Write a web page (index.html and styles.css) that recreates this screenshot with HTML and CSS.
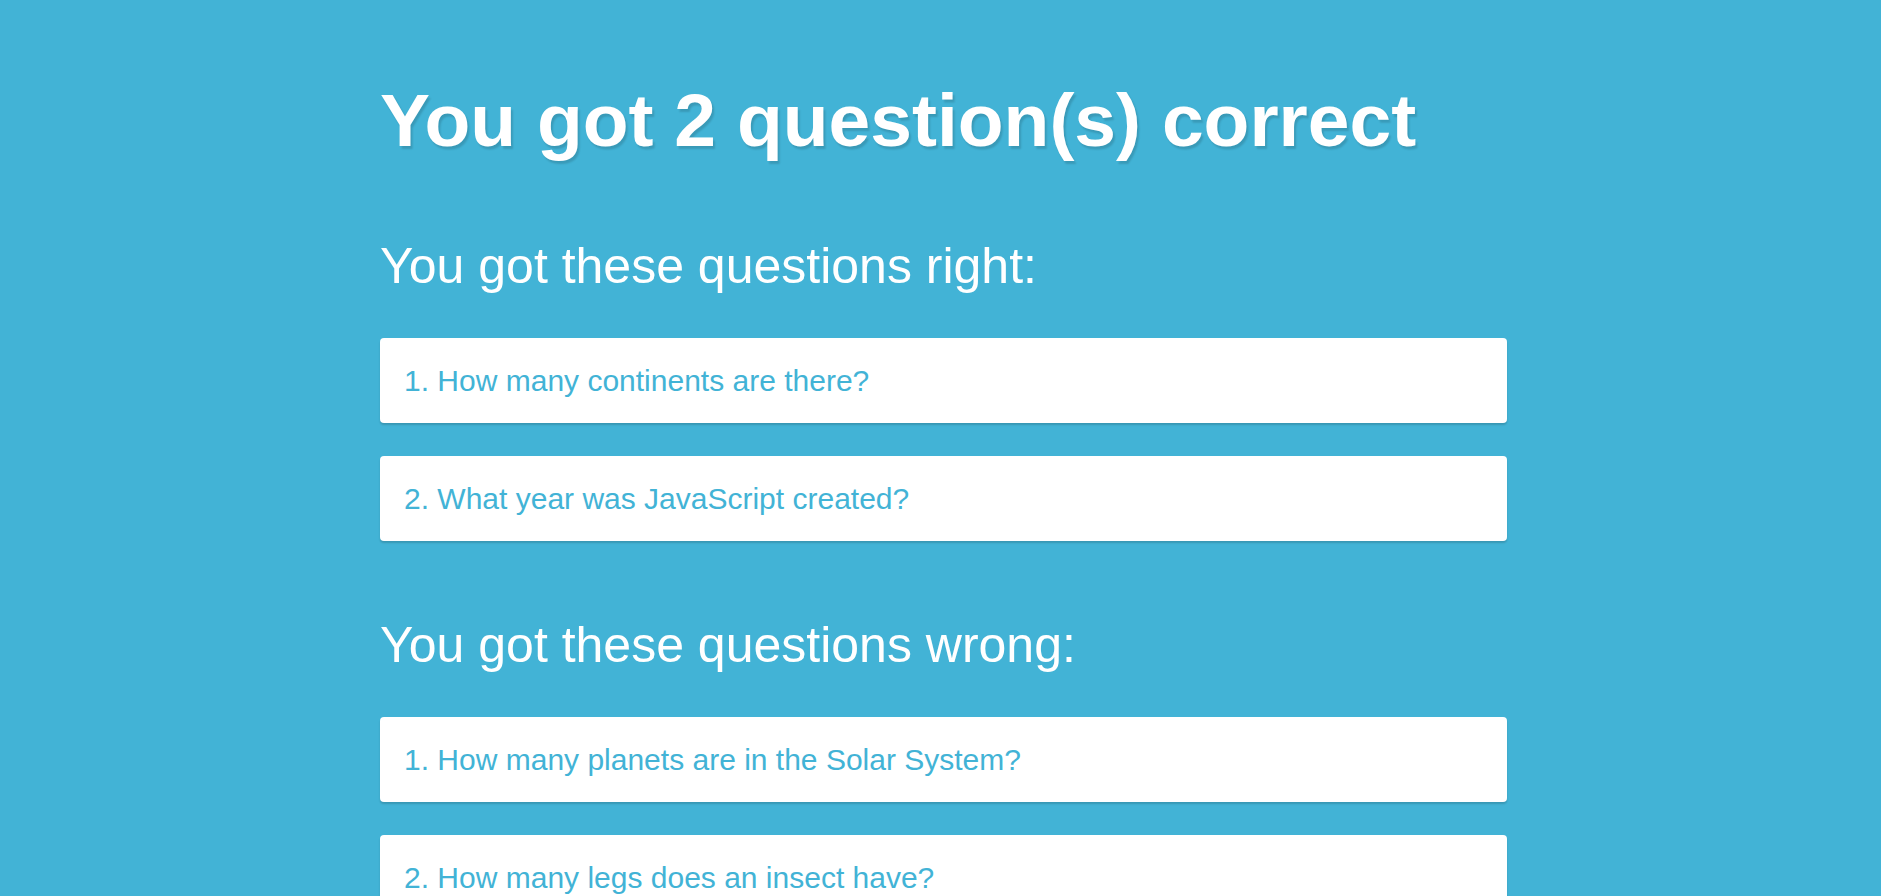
FILE: index.html
```html
<!DOCTYPE html>
<html lang="en">
<head>
<meta charset="utf-8">
<title>Quiz results</title>
<link rel="stylesheet" href="styles.css">
</head>
<body>
<main class="results">
  <h1 class="score">You got 2 question(s) correct</h1>

  <section class="group">
    <h2 class="group-title">You got these questions right:</h2>
    <ul class="question-list">
      <li class="question-card">1. How many continents are there?</li>
      <li class="question-card">2. What year was JavaScript created?</li>
    </ul>
  </section>

  <section class="group">
    <h2 class="group-title">You got these questions wrong:</h2>
    <ul class="question-list">
      <li class="question-card">1. How many planets are in the Solar System?</li>
      <li class="question-card">2. How many legs does an insect have?</li>
    </ul>
  </section>
</main>
</body>
</html>
```

FILE: styles.css
```css
html, body {
  margin: 0;
  padding: 0;
}

body {
  background: #42b3d6;
  font-family: "Liberation Sans", Arial, sans-serif;
  color: #ffffff;
}

.results {
  width: 1127px;
  margin-left: 380px;
  padding-bottom: 60px;
}

.score {
  margin: 77px 0 74px;
  font-size: 75px;
  line-height: 86px;
  font-weight: 700;
  text-shadow: 2px 3px 2px rgba(0, 0, 0, 0.14);
}

.group {
  margin-bottom: 75px;
}

.group-title {
  margin: 0 0 43px;
  font-size: 50px;
  line-height: 58px;
  font-weight: 400;
}

.question-list {
  list-style: none;
  margin: 0;
  padding: 0;
  display: flex;
  flex-direction: column;
  gap: 33px;
}

.question-card {
  background: #ffffff;
  color: #42b3d6;
  border-radius: 4px;
  padding: 25px 24px;
  font-size: 30px;
  line-height: 35px;
  box-shadow: 0 2px 2px rgba(0, 0, 0, 0.16);
}
```
